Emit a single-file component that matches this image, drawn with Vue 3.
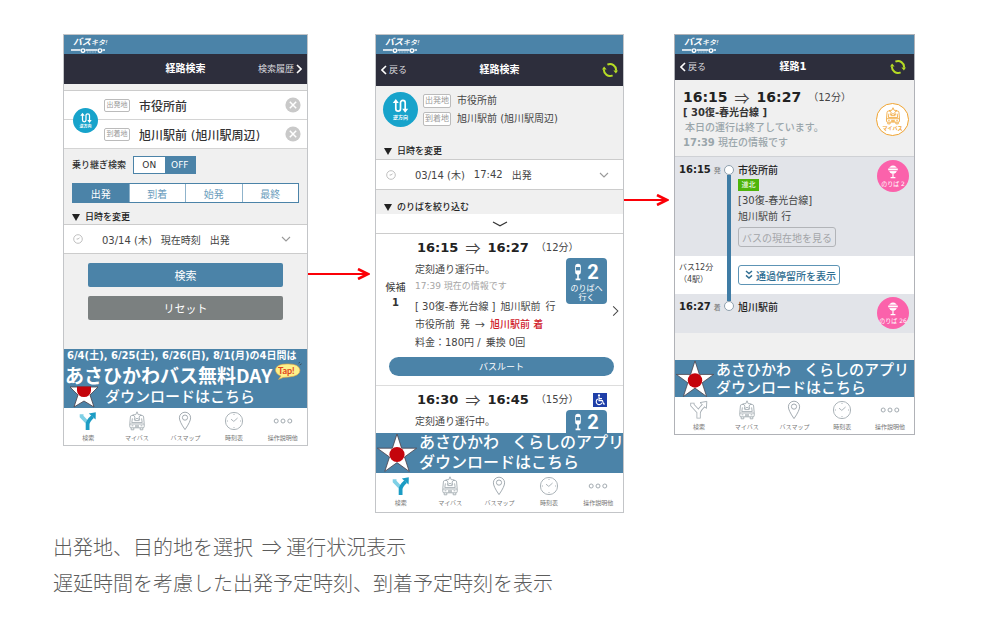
<script setup>
import { ref } from 'vue'

const origin = ref('市役所前')
const destination = ref('旭川駅前 (旭川駅周辺)')
const transfer = ref('OFF')
const timing = ref('出発')
const timings = ['出発', '到着', '始発', '最終']

const navItems = [
  { icon: 'i-route', label: '検索' },
  { icon: 'i-bus', label: 'マイバス' },
  { icon: 'i-pin', label: 'バスマップ' },
  { icon: 'i-clock', label: '時刻表' },
  { icon: 'i-dots', label: '操作説明他' }
]
</script>

<template>
  <svg class="defs" aria-hidden="true">
    <symbol id="i-logo" viewBox="0 0 36 5">
      <path d="M0 2H9.5M14.5 2H26.5M31.5 2H34" stroke="#fff" stroke-width="1.3" fill="none" />
      <path d="M16 4H25" stroke="#c8dbe8" stroke-width="0.8" stroke-dasharray="1 0.6" />
      <circle cx="12" cy="2.6" r="1.8" fill="none" stroke="#fff" stroke-width="1.3" />
      <circle cx="29" cy="2.6" r="1.8" fill="none" stroke="#fff" stroke-width="1.3" />
    </symbol>
    <symbol id="i-route-on" viewBox="0 0 20 20">
      <path d="M3.6 3.2V5.5L9.3 11.5" fill="none" stroke="#7fd0e6" stroke-width="3.8" />
      <path d="M9.6 19V13.2Q9.8 10 14.6 5.6" fill="none" stroke="#1b9cc4" stroke-width="3.8" />
      <path d="M10.8 2.6L17.8 1.2L17.6 8.6Z" fill="#1b9cc4" />
    </symbol>
    <symbol id="i-route" viewBox="0 0 20 20">
      <path d="M3.4 2.8V5.2L9.3 11.5M9.6 18.6V13.2Q9.8 10 14.6 5.6" fill="none" stroke="#a3abb1" stroke-width="4.2" />
      <path d="M11 2.6L17.8 1.4L17.4 8.4Z" fill="#fff" stroke="#a3abb1" stroke-width="0.9" />
      <path d="M3.4 3.6V5.2L9.3 11.5M9.6 17.8V13.2Q9.8 10 14.8 5.4" fill="none" stroke="#fff" stroke-width="2.6" />
    </symbol>
    <symbol id="i-bus" viewBox="0 0 20 20">
      <g fill="none" stroke="currentColor" stroke-width="0.9" stroke-linejoin="round">
        <path d="M6.8 4.5H4.6Q3.6 4.5 3.4 6L2.8 12.5V15.6Q2.8 16.8 4 16.8H16Q17.2 16.8 17.2 15.6V12.5L16.6 6Q16.4 4.5 15.4 4.5H13.2" />
        <path d="M10 0.8L11.2 3.6L14.2 3.9L12 5.9L12.7 8.8L10 7.3L7.3 8.8L8 5.9L5.8 3.9L8.8 3.6Z" />
        <path d="M5.4 7.4L4.8 11.6H15.2L14.6 7.4M7.5 9.6H12.5M2.8 13H17.2M4.6 14.8H6.4M13.6 14.8H15.4M8 14.8H12M8 15.9H12" />
        <path d="M4.2 17V18.8H6.8V17M13.2 17V18.8H15.8V17" />
      </g>
    </symbol>
    <symbol id="i-pin" viewBox="0 0 20 20">
      <g fill="none" stroke="#a3abb1" stroke-width="1">
        <path d="M10 18.6Q4.4 10.6 4.4 6.8A5.6 5.6 0 0 1 15.6 6.8Q15.6 10.6 10 18.6Z" />
        <circle cx="10" cy="6.6" r="2.6" />
      </g>
    </symbol>
    <symbol id="i-clock" viewBox="0 0 20 20">
      <g fill="none" stroke="#a3abb1" stroke-width="0.9">
        <circle cx="10" cy="10" r="8.6" />
        <path d="M7 8.2L9.8 10.4L13.6 7M10 2.8V4M10 16V17.2M2.8 10H4M16 10H17.2" />
      </g>
    </symbol>
    <symbol id="i-dots" viewBox="0 0 20 20">
      <g fill="none" stroke="#a3abb1" stroke-width="1">
        <circle cx="3.2" cy="10" r="2" /><circle cx="10" cy="10" r="2" /><circle cx="16.8" cy="10" r="2" />
      </g>
    </symbol>
    <symbol id="i-swap" viewBox="0 0 20 17">
      <path d="M5 3.5V11.5A2.5 2.5 0 0 0 10 11.5V5A2.5 2.5 0 0 1 15 5V13" fill="none" stroke="#fff" stroke-width="1.8" />
      <path d="M1.8 5.4L5 1L8.2 5.4ZM11.8 11.4L15 15.8L18.2 11.4Z" fill="#fff" />
    </symbol>
    <symbol id="i-refresh" viewBox="0 0 16 16">
      <path d="M5.4 2.6A6 6 0 0 1 14 8.6M10.6 13.4A6 6 0 0 1 2 7.4" fill="none" stroke="#b6dc25" stroke-width="2" />
      <path d="M11.4 8.4H16L13.9 11.6ZM4.6 7.6H0L2.1 4.4Z" fill="#b6dc25" />
    </symbol>
    <symbol id="i-down" viewBox="0 0 10 6">
      <path d="M1 1L5 5L9 1" fill="none" stroke="currentColor" stroke-width="1.1" />
    </symbol>
    <symbol id="i-right" viewBox="0 0 6 10">
      <path d="M1 1L5 5L1 9" fill="none" stroke="currentColor" />
    </symbol>
    <symbol id="i-left" viewBox="0 0 6 10">
      <path d="M5 1L1 5L5 9" fill="none" stroke="currentColor" />
    </symbol>
    <symbol id="i-star" viewBox="0 0 42 40">
      <path d="M21 1L25.6 15.2L40.6 15.2L28.5 24L33.2 38.4L21 29.6L8.8 38.4L13.5 24L1.4 15.2L16.4 15.2Z" fill="#fff" stroke="#4a3f48" stroke-width="0.8" />
      <circle cx="21" cy="21.5" r="7.6" fill="#c4040c" />
    </symbol>
    <symbol id="i-sign" viewBox="0 0 8 18">
      <rect x="1.2" y="0.8" width="5.6" height="11" rx="2.8" fill="#fff" />
      <rect x="2" y="4" width="4" height="3.4" fill="#4b83a8" />
      <path d="M4 11V16M1.6 16.4H6.4" stroke="#fff" stroke-width="1.6" />
    </symbol>
    <symbol id="i-stop" viewBox="0 0 12 14">
      <circle cx="6" cy="4.6" r="4.2" fill="#fff" />
      <path d="M0 2.7H12V6.1H0Z" fill="#fb62ab" />
      <path d="M1.2 3.5H10.8V5.3H1.2Z" fill="#fff" />
      <path d="M6 8.6V12M3.6 12.7H8.4" stroke="#fff" stroke-width="1.2" />
    </symbol>
    <symbol id="i-arrowhead" viewBox="0 0 13 12">
      <path d="M1 1L11 6L1 11" fill="none" stroke="#fb0007" stroke-width="2.6" />
    </symbol>
  </svg>

  <main class="page">
    <div class="flow">
      <section class="phone" aria-label="検索条件">
        <div class="brand"><span class="word"><b>バス</b>キタ!</span><svg class="bus-line"><use href="#i-logo" /></svg></div>
        <header class="bar bar-a">
          <h2>経路検索</h2>
          <a href="#history" class="bar-end">検索履歴 <svg class="chev"><use href="#i-right" /></svg></a>
        </header>

        <div class="places">
          <div class="place">
            <label for="from" class="tag">出発地</label>
            <input id="from" v-model="origin" type="text" />
            <button class="clear" aria-label="出発地を消去" @click="origin = ''">
              <svg viewBox="0 0 16 16"><circle cx="8" cy="8" r="7.6" fill="#c9c9c9" /><path d="M4.8 4.8L11.2 11.2M11.2 4.8L4.8 11.2" stroke="#fff" stroke-width="1.5" /></svg>
            </button>
          </div>
          <div class="place">
            <label for="to" class="tag">到着地</label>
            <input id="to" v-model="destination" type="text" />
            <button class="clear" aria-label="到着地を消去" @click="destination = ''">
              <svg viewBox="0 0 16 16"><circle cx="8" cy="8" r="7.6" fill="#c9c9c9" /><path d="M4.8 4.8L11.2 11.2M11.2 4.8L4.8 11.2" stroke="#fff" stroke-width="1.5" /></svg>
            </button>
          </div>
          <button class="swap swap-over"><svg><use href="#i-swap" /></svg><span>逆方向</span></button>
        </div>

        <div class="options">
          <div class="transfer">
            <span>乗り継ぎ検索</span>
            <div class="toggle">
              <button v-for="t in ['ON', 'OFF']" :key="t" :class="{ on: transfer === t }" @click="transfer = t">{{ t }}</button>
            </div>
          </div>
          <div class="tabs">
            <button v-for="t in timings" :key="t" :class="{ on: timing === t }" @click="timing = t">{{ t }}</button>
          </div>
          <h3 class="fold"><i></i>日時を変更</h3>
        </div>
        <button class="when">
          <svg class="tick" viewBox="0 0 10 10"><circle cx="5" cy="5" r="4.3" fill="none" stroke="#b9b9b9" stroke-width="0.9" /><path d="M3.6 5H5.2L6.6 3.6" fill="none" stroke="#b9b9b9" /></svg>
          <span>03/14 (木)</span><span>現在時刻</span><span>出発</span>
          <svg class="caret"><use href="#i-down" /></svg>
        </button>
        <div class="actions">
          <button class="primary">検索</button>
          <button>リセット</button>
        </div>

        <a href="#app" class="promo">
          <span class="dates">6/4(土), 6/25(土), 6/26(日), 8/1(月)の4日間は</span>
          <span class="free">あさひかわバス無料DAY
            <svg class="tap" viewBox="0 0 28 18">
              <path d="M7 14Q1 12 1.5 7Q3 2 13 2Q25 1.5 26 8Q26 14 15 15L9 15.5L4.5 17.5Z" fill="#fdf08b" stroke="#e8a33c" stroke-width="0.6" />
              <path d="M24.5 1.2L26 0.2M25.8 3L27.6 1.8" stroke="#333" stroke-width="0.6" />
              <text x="4" y="11.6" class="tap-text">Tap!</text>
            </svg>
          </span>
          <span class="download">
            <svg viewBox="0 0 30 22"><path d="M1 1H29L21 9L25 21L15 15L5 21L9 9Z" fill="#fff" stroke="#4a3f48" stroke-width="0.8" /><path d="M8 0.6H22V4.5A7 6.6 0 0 1 8 4.5Z" fill="#c4040c" /></svg>
            ダウンロードはこちら
          </span>
        </a>
        <nav class="tabbar">
          <a v-for="(n, i) in navItems" :key="n.label" href="#nav"><svg><use :href="i === 0 ? '#i-route-on' : '#' + n.icon" /></svg>{{ n.label }}</a>
        </nav>
      </section>

      <div class="arrow arrow-a"><span></span><svg><use href="#i-arrowhead" /></svg></div>

      <section class="phone" aria-label="検索結果">
        <div class="brand"><span class="word"><b>バス</b>キタ!</span><svg class="bus-line"><use href="#i-logo" /></svg></div>
        <header class="bar bar-b">
          <a href="#back" class="back"><svg class="chev"><use href="#i-left" /></svg>戻る</a>
          <h2>経路検索</h2>
          <button class="refresh" aria-label="更新"><svg><use href="#i-refresh" /></svg></button>
        </header>

        <div class="trip">
          <button class="swap"><svg><use href="#i-swap" /></svg><span>逆方向</span></button>
          <dl>
            <div><dt class="tag">出発地</dt><dd>市役所前</dd></div>
            <div><dt class="tag">到着地</dt><dd>旭川駅前 (旭川駅周辺)</dd></div>
          </dl>
        </div>
        <h3 class="fold fold-b"><i></i>日時を変更</h3>
        <button class="when when-b">
          <svg class="tick" viewBox="0 0 10 10"><circle cx="5" cy="5" r="4.3" fill="none" stroke="#b9b9b9" stroke-width="0.9" /><path d="M3.6 5H5.2L6.6 3.6" fill="none" stroke="#b9b9b9" /></svg>
          <span>03/14 (木)</span><span>17:42</span><span>出発</span>
          <svg class="caret"><use href="#i-down" /></svg>
        </button>
        <h3 class="fold fold-c"><i></i>のりばを絞り込む</h3>
        <button class="expand" aria-label="開く"><svg viewBox="0 0 16 6"><path d="M1 1L8 4.8L15 1" fill="none" stroke="#333" stroke-width="1.2" /></svg></button>

        <article class="result">
          <div class="times"><b>16:15</b><span>⇒</span><b>16:27</b><small>（12分）</small></div>
          <div class="detail">
            <div class="rank">候補<b>1</b></div>
            <div class="lines">
              <p>定刻通り運行中。</p>
              <p class="info">17:39 現在の情報です</p>
              <p class="tall first"><span>[ 30復-春光台線 ]</span><span>旭川駅前</span><span>行</span></p>
              <p class="tall"><span>市役所前</span><span>発</span><span class="to">→</span><em>旭川駅前 着</em></p>
              <p class="tall"><span>料金：180円 /</span><span>乗換 0回</span></p>
            </div>
            <button class="stand"><span class="no"><svg><use href="#i-sign" /></svg>2</span>のりばへ<br />行く</button>
            <svg class="next"><use href="#i-right" /></svg>
          </div>
          <button class="route">バスルート</button>
        </article>
        <article class="result cut">
          <div class="times"><b>16:30</b><span>⇒</span><b>16:45</b><small>（15分）</small>
            <svg class="wheel" viewBox="0 0 14 14"><rect width="14" height="14" fill="#1f3fa8" /><g fill="none" stroke="#fff" stroke-width="1.1"><path d="M6 3.6V7.6H9.4L10.6 11H12M6 5.6H9" /><path d="M4.8 6A3 3 0 1 0 9 9.8" /></g><circle cx="6" cy="2.4" r="1.1" fill="#fff" /></svg>
          </div>
          <div class="detail">
            <div class="rank"></div>
            <div class="lines"><p>定刻通り運行中。</p></div>
            <button class="stand"><span class="no"><svg><use href="#i-sign" /></svg>2</span></button>
            <span class="next"></span>
          </div>
        </article>

        <a href="#app" class="kurashi">
          <svg><use href="#i-star" /></svg>
          <span class="copy"><span class="lead"><span>あさひかわ</span><span>くらしのアプリ</span></span><span>ダウンロードはこちら</span></span>
        </a>
        <nav class="tabbar tabbar-b">
          <a v-for="(n, i) in navItems" :key="n.label" href="#nav"><svg><use :href="i === 0 ? '#i-route-on' : '#' + n.icon" /></svg>{{ n.label }}</a>
        </nav>
      </section>

      <div class="arrow arrow-b"><span></span><svg><use href="#i-arrowhead" /></svg></div>

      <section class="phone phone-c" aria-label="経路詳細">
        <div class="brand"><span class="word"><b>バス</b>キタ!</span><svg class="bus-line"><use href="#i-logo" /></svg></div>
        <header class="bar bar-c">
          <a href="#back" class="back"><svg class="chev"><use href="#i-left" /></svg>戻る</a>
          <h2>経路1</h2>
          <button class="refresh" aria-label="更新"><svg><use href="#i-refresh" /></svg></button>
        </header>

        <div class="summary">
          <div>
            <div class="times big"><b>16:15</b><span>⇒</span><b>16:27</b><small>（12分）</small></div>
            <p class="line-name">[ 30復-春光台線 ]</p>
            <p class="muted ended">本日の運行は終了しています。</p>
            <p class="muted"><b>17:39</b> 現在の情報です</p>
          </div>
          <button class="mybus"><svg><use href="#i-bus" /></svg>マイバス</button>
        </div>

        <ol class="legs">
          <li class="leg">
            <div class="clock"><b>16:15</b>発</div>
            <div class="rail start"><i></i><span></span></div>
            <div class="stop-body">
              <p class="stop">市役所前</p>
              <span class="company">道北</span>
              <p>[30復-春光台線]</p>
              <p>旭川駅前 行</p>
              <button class="outline off" disabled>バスの現在地を見る</button>
            </div>
            <button class="pink"><svg><use href="#i-stop" /></svg>のりば 2</button>
          </li>
          <li class="leg ride">
            <div class="span-time">バス12分<small>（4駅）</small></div>
            <div class="rail"><span></span></div>
            <div class="stop-body">
              <button class="outline"><svg viewBox="0 0 8 10"><path d="M1 1L4 3.6L7 1M1 5.4L4 8L7 5.4" fill="none" stroke="currentColor" stroke-width="1.4" /></svg>通過停留所を表示</button>
            </div>
          </li>
          <li class="leg last">
            <div class="clock"><b>16:27</b>着</div>
            <div class="rail end"><span></span><i></i></div>
            <div class="stop-body"><p class="stop">旭川駅前</p></div>
            <button class="pink"><svg><use href="#i-stop" /></svg>のりば 26</button>
          </li>
        </ol>

        <a href="#app" class="kurashi kurashi-c">
          <svg><use href="#i-star" /></svg>
          <span class="copy"><span class="lead"><span>あさひかわ</span><span>くらしのアプリ</span></span><span>ダウンロードはこちら</span></span>
        </a>
        <nav class="tabbar">
          <a v-for="n in navItems" :key="n.label" href="#nav"><svg><use :href="'#' + n.icon" /></svg>{{ n.label }}</a>
        </nav>
      </section>
    </div>

    <div class="caption">
      <p>出発地、目的地を選択&nbsp; ⇒ 運行状況表示</p>
      <p>遅延時間を考慮した出発予定時刻、到着予定時刻を表示</p>
    </div>
  </main>
</template>

<style>
body {
  background: #fff;
}
</style>

<style scoped>
* {
  box-sizing: border-box;
}
.defs {
  position: absolute;
  width: 0;
  height: 0;
}
.page {
  padding-top: 34px;
  font-family: "DejaVu Sans", "Noto Sans CJK JP", sans-serif;
  color: #444;
  font-size: 10px;
  line-height: 16px;
}
h2, h3, p, dl, dd, ol {
  margin: 0;
  padding: 0;
}
button, input {
  font-family: inherit;
  margin: 0;
  padding: 0;
  border: 0;
  background: none;
  color: inherit;
}
svg {
  display: block;
  flex-shrink: 0;
}
a {
  color: inherit;
  text-decoration: none;
}
.flow {
  display: grid;
  grid-template-columns: 245fr 67fr 249fr 50fr 241fr;
  align-items: start;
  padding: 0 85px 0 63px;
}
.phone {
  min-width: 0;
  border: 1px solid #c3c5c8;
  background: #f0f0f0;
  white-space: nowrap;
  overflow: hidden;
}
.phone-c {
  border-color: #b0b2b7;
}
.brand {
  height: 19px;
  padding: 2px 0 0 7px;
  background: #4b83a8;
  color: #fff;
}
.word {
  display: block;
  padding-left: 2px;
  font-size: 7px;
  line-height: 10px;
  font-style: italic;
  font-weight: 500;
}
.word b {
  font-size: 9px;
}
.bus-line {
  width: 36px;
  height: 5px;
}
.bar {
  display: grid;
  grid-template-columns: 1fr auto 1fr;
  align-items: center;
  height: 30px;
  padding: 0 5px;
  background: #2d2e3c;
  color: #fff;
}
.bar-b {
  height: 32px;
}
.bar-c {
  height: 26px;
  padding-right: 8px;
}
.bar h2 {
  grid-column: 2;
  font-size: 10px;
  font-weight: 700;
}
.bar-end, .back {
  display: flex;
  align-items: center;
  gap: 2px;
  font-size: 9px;
  color: #d8d8dc;
}
.bar-end {
  justify-content: flex-end;
}
.chev {
  width: 6px;
  height: 10px;
  color: #fff;
  stroke-width: 1.6;
}
.refresh {
  justify-self: end;
}
.refresh svg {
  width: 16px;
  height: 16px;
}
.places {
  position: relative;
  margin-top: 6px;
  border-top: 1px solid #ccc;
  background: #fff;
}
.place {
  display: flex;
  align-items: center;
  gap: 9px;
  height: 29px;
  padding: 0 6px 0 40px;
  border-bottom: 1px solid #d4d4d4;
}
.tag {
  flex-shrink: 0;
  width: 26px;
  height: 13px;
  border: 1px solid #bbb;
  border-radius: 2px;
  background: #fff;
  color: #999;
  font-size: 7px;
  line-height: 11px;
  text-align: center;
}
.place input {
  flex: 1;
  min-width: 0;
  height: 20px;
  color: #333;
  font-size: 12px;
  font-weight: 500;
  outline: 0;
}
.clear svg {
  width: 16px;
  height: 16px;
}
.swap {
  display: flex;
  flex-direction: column;
  align-items: center;
  justify-content: center;
  flex-shrink: 0;
  width: 35px;
  height: 35px;
  border-radius: 50%;
  background: #17a3cb;
  color: #fff;
  font-size: 5px;
  line-height: 7px;
  font-weight: 700;
}
.swap svg {
  width: 19px;
  height: 16px;
}
.swap-over {
  position: absolute;
  left: 9px;
  top: 17px;
  width: 25px;
  height: 25px;
  font-size: 4px;
  line-height: 5px;
}
.swap-over svg {
  width: 14px;
  height: 12px;
}
.options {
  padding: 7px 8px 0;
}
.transfer {
  display: flex;
  align-items: center;
  gap: 7px;
  font-size: 9px;
  font-weight: 500;
  color: #333;
}
.toggle, .tabs {
  display: flex;
  border: 1px solid #4b83a8;
  background: #fff;
}
.toggle {
  width: 63px;
  height: 18px;
}
.toggle button, .tabs button {
  flex: 1;
  font-size: 9px;
}
.toggle .on, .tabs .on {
  background: #4b83a8;
  color: #fff;
}
.tabs {
  height: 20px;
  margin: 9px 0 7px;
}
.tabs button {
  color: #6b9dbd;
  font-size: 10px;
}
.tabs button + button {
  border-left: 1px solid #8fb3cb;
}
.fold {
  display: flex;
  align-items: center;
  gap: 5px;
  font-size: 9px;
  line-height: 14px;
  font-weight: 500;
  color: #222;
}
.fold i {
  border: 4px solid transparent;
  border-top: 7px solid #222;
  border-bottom: 0;
}
.fold-b {
  padding: 16px 8px 1px;
}
.fold-c {
  padding: 10px 8px 0;
}
.when {
  display: flex;
  align-items: center;
  gap: 9px;
  width: 100%;
  height: 30px;
  padding: 0 16px 0 9px;
  border-top: 1px solid #ccc;
  border-bottom: 1px solid #ccc;
  background: #fff;
  font-size: 10px;
  color: #444;
}
.when-b {
  height: 31px;
  padding-left: 10px;
}
.tick {
  width: 10px;
  height: 10px;
  margin-right: 10px;
}
.caret {
  width: 10px;
  height: 6px;
  margin-left: auto;
  color: #999;
}
.when-b {
  padding-right: 14px;
}
.actions {
  display: grid;
  gap: 9px;
  padding: 9px 24px 29px;
}
.actions button {
  height: 24px;
  border-radius: 2px;
  background: #7b8080;
  color: #fff;
  font-size: 11px;
}
.actions .primary {
  background: #4b83a8;
}
.promo {
  display: block;
  height: 59px;
  background: #4b83a8;
  color: #fff;
  overflow: hidden;
}
.dates, .free, .download {
  display: flex;
  align-items: center;
}
.dates {
  padding-left: 3px;
  font-size: 10px;
  line-height: 14px;
  font-weight: 700;
}
.free {
  gap: 2px;
  padding-left: 1px;
  font: 700 19px/23px "Noto Sans CJK JP", sans-serif;
}
.tap {
  width: 28px;
  height: 18px;
  margin-top: -8px;
}
.tap-text {
  font: 700 9px Lato, sans-serif;
  fill: #e0431c;
}
.download {
  gap: 6px;
  padding-left: 5px;
  font-size: 15px;
  line-height: 22px;
  font-weight: 500;
}
.download svg {
  width: 30px;
  height: 22px;
}
.tabbar {
  display: grid;
  grid-template-columns: repeat(5, 1fr);
  height: 37px;
  padding-top: 3px;
  background: #fff;
}
.tabbar-b {
  height: 39px;
}
.tabbar a {
  display: flex;
  flex-direction: column;
  align-items: center;
  gap: 2px;
  font-size: 6px;
  line-height: 10px;
  color: #777;
}
.tabbar svg {
  width: 20px;
  height: 20px;
  color: #a3abb1;
}
.arrow {
  display: flex;
  align-items: center;
  padding-right: 5px;
}
.arrow-a {
  margin-top: 234px;
}
.arrow-b {
  margin-top: 160px;
}
.arrow span {
  flex: 1;
  height: 2px;
  margin-right: -11px;
  background: #fb0007;
}
.arrow svg {
  width: 13px;
  height: 12px;
}
.trip {
  display: flex;
  gap: 5px;
  padding: 6px 7px 0;
}
.trip dl div {
  display: flex;
  align-items: center;
  gap: 6px;
  height: 18px;
}
.trip .tag {
  width: 28px;
  height: 14px;
  font-size: 8px;
  line-height: 12px;
}
.expand {
  display: grid;
  place-items: center;
  width: 100%;
  height: 20px;
  border-bottom: 1px solid #ccc;
  background: #fff;
}
.expand svg {
  width: 16px;
  height: 6px;
}
.result {
  padding-top: 6px;
  border-bottom: 1px solid #ddd;
  background: #fff;
}
.cut {
  height: 47px;
  border: 0;
  overflow: hidden;
}
.times {
  display: flex;
  align-items: center;
  gap: 7px;
  padding-left: 41px;
  padding-right: 16px;
  font-size: 13px;
  line-height: 16px;
}
.times b {
  color: #222;
}
.times span {
  font-family: "Noto Sans CJK JP", sans-serif;
  font-size: 15px;
}
.times small {
  font-size: 10px;
}
.wheel {
  width: 14px;
  height: 14px;
  margin-left: auto;
}
.detail {
  display: flex;
  align-items: flex-start;
  margin-top: 2px;
}
.rank {
  display: grid;
  justify-items: center;
  width: 39px;
  padding-top: 22px;
  line-height: 15px;
  color: #333;
}
.lines {
  flex: 1;
  min-width: 0;
  padding-top: 4px;
}
.lines .info {
  font-size: 9px;
  color: #a5a5a5;
}
.lines .tall {
  display: flex;
  gap: 5px;
  line-height: 18px;
}
.lines .first {
  margin-top: 4px;
}
.to {
  font-family: "Noto Sans CJK JP", sans-serif;
}
em {
  font-style: normal;
  font-weight: 500;
  color: #d0202a;
}
.stand {
  width: 41px;
  height: 46px;
  border-radius: 4px;
  background: #4b83a8;
  color: #fff;
  font-size: 8px;
  line-height: 9px;
}
.no {
  display: flex;
  align-items: center;
  justify-content: center;
  gap: 5px;
  height: 24px;
  font: 700 20px/20px Roboto, sans-serif;
}
.no svg {
  width: 8px;
  height: 18px;
}
.cut .stand {
  display: flex;
  justify-content: center;
}
.next {
  align-self: center;
  width: 7px;
  height: 12px;
  margin: 12px 4px 0 5px;
  stroke-width: 0.9;
}
.route {
  display: block;
  width: calc(100% - 22px);
  height: 19px;
  margin: 5px 9px 9px 13px;
  border-radius: 10px;
  background: #4b83a8;
  color: #fff;
  font-size: 9px;
}
.kurashi {
  display: flex;
  align-items: center;
  gap: 1px;
  height: 40px;
  background: #4b83a8;
  color: #fff;
  font-size: 16px;
  line-height: 20px;
  font-weight: 500;
  overflow: hidden;
}
.kurashi svg {
  width: 42px;
  height: 40px;
}
.copy {
  display: grid;
}
.lead {
  display: flex;
  gap: 13px;
}
.kurashi-c {
  height: 37px;
  margin-top: 27px;
  font-size: 15px;
  line-height: 18px;
}
.kurashi-c svg {
  width: 40px;
  height: 38px;
}
.summary {
  display: flex;
  justify-content: space-between;
  align-items: center;
  height: 76px;
  padding: 3px 5px 0 8px;
}
.summary .big {
  padding: 0;
  font-size: 14px;
  line-height: 17px;
}
.line-name {
  line-height: 14px;
  font-weight: 700;
  color: #333;
}
.muted {
  line-height: 15px;
  font-weight: 500;
  color: #9aa6ab;
}
.ended {
  padding-left: 2px;
}
.mybus {
  display: grid;
  justify-items: center;
  align-content: center;
  width: 33px;
  height: 33px;
  border: 1px solid #f0a431;
  border-radius: 50%;
  background: #fff;
  color: #f0a431;
  font-size: 5px;
  line-height: 7px;
  font-weight: 700;
}
.mybus svg {
  width: 18px;
  height: 18px;
}
.legs {
  list-style: none;
}
.leg {
  display: grid;
  grid-template-columns: 45px 10px 1fr 32px;
  padding: 0 5px 0 4px;
  min-height: 39px;
  background: #e2e4e9;
}
.leg:first-child {
  border-top: 1px solid #cfd1d5;
}
.ride {
  min-height: 38px;
  background: #fff;
}
.clock {
  padding-top: 5px;
  font-size: 7px;
  color: #777;
}
.clock b {
  margin-right: 3px;
  font-size: 10px;
  color: #222;
}
.span-time {
  padding-top: 6px;
  font-size: 8px;
  line-height: 12px;
}
.span-time small {
  display: block;
  font-size: 8px;
}
.rail {
  display: flex;
  flex-direction: column;
  align-items: center;
}
.rail i {
  flex-shrink: 0;
  width: 10px;
  height: 10px;
  border: 1px solid #8ea0ad;
  border-radius: 50%;
  background: #fff;
}
.rail span {
  flex: 1;
  width: 4px;
  background: #3f7ca5;
}
.start {
  padding-top: 8px;
}
.end span {
  flex: none;
  height: 7px;
}
.stop-body {
  padding: 6px 0 0 4px;
}
.stop {
  line-height: 15px;
  font-weight: 500;
  color: #222;
}
.company {
  display: block;
  width: 21px;
  height: 12px;
  margin: 1px 0 2px;
  background: #4eb50b;
  color: #fff;
  font-size: 7px;
  line-height: 12px;
  text-align: center;
}
.outline {
  display: flex;
  align-items: center;
  gap: 3px;
  height: 20px;
  padding: 0 3px;
  border: 1px solid #5d94b5;
  border-radius: 3px;
  background: #fff;
  color: #2f6d91;
  font-size: 10px;
  font-weight: 500;
}
.outline svg {
  width: 8px;
  height: 10px;
  margin-left: 3px;
}
.off {
  margin: 2px 0 9px;
  border-color: #b2b4b8;
  background: none;
  color: #a2a4a8;
  font-weight: 400;
}
.ride .stop-body {
  padding-top: 9px;
}
.pink {
  display: grid;
  justify-items: center;
  align-content: center;
  gap: 1px;
  width: 32px;
  height: 32px;
  margin-top: 3px;
  border-radius: 50%;
  background: #fb62ab;
  color: #fff;
  font-size: 6px;
  line-height: 8px;
}
.pink svg {
  width: 12px;
  height: 14px;
}
.caption {
  padding: 16px 53px 0;
  font: 300 20px/36px "Noto Sans CJK JP", sans-serif;
  color: #5c5c5c;
}
</style>
